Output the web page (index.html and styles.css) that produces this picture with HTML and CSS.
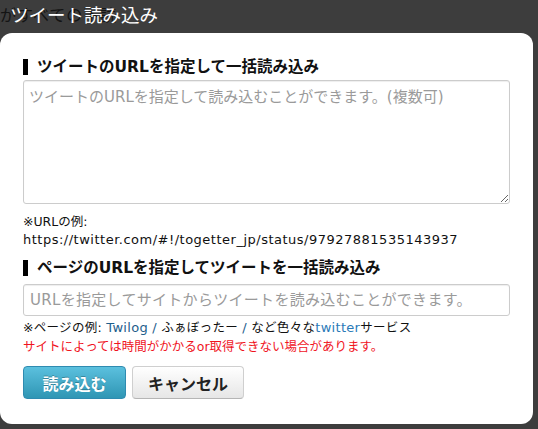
FILE: index.html
```html
<!DOCTYPE html>
<html lang="ja">
<head>
<meta charset="utf-8">
<title>ツイート読み込み</title>
<link rel="stylesheet" href="styles.css">
</head>
<body>
<div class="titlebar">
  <span class="ghost">がすべての下読</span>
  <h1 class="title">ツイート読み込み</h1>
</div>
<div class="panel">
  <h2 class="heading">ツイートのURLを指定して一括読み込み</h2>
  <textarea class="area" placeholder="ツイートのURLを指定して読み込むことができます。(複数可)"></textarea>
  <p class="note">※URLの例:<br><span class="url">https://twitter.com/#!/togetter_jp/status/97927881535143937</span></p>
  <h2 class="heading">ページのURLを指定してツイートを一括読み込み</h2>
  <input class="field" type="text" placeholder="URLを指定してサイトからツイートを読み込むことができます。">
  <p class="note note-ex">※ページの例: <span class="link">Twilog</span> <span class="link">/</span> ふぁぼったー <span class="link">/</span> など色々な<span class="link light">twitter</span>サービス</p>
  <p class="warn">サイトによっては時間がかかるor取得できない場合があります。</p>
  <div class="actions">
    <button class="btn btn-primary" type="button">読み込む</button>
    <button class="btn btn-default" type="button">キャンセル</button>
  </div>
</div>
</body>
</html>
```
FILE: styles.css
```css
html, body {
  margin: 0;
  padding: 0;
}
body {
  background: #3d3d3d;
  font-family: "DejaVu Sans", "Noto Sans CJK JP", sans-serif;
  color: #222;
  width: 538px;
  height: 429px;
  overflow: hidden;
}
.titlebar {
  position: relative;
  height: 33px;
  padding-left: 10px;
  box-sizing: border-box;
}
.ghost {
  position: absolute;
  left: 0;
  top: 3px;
  font-family: "Noto Sans CJK JP", sans-serif;
  font-size: 16px;
  line-height: 22px;
  color: #141414;
  white-space: nowrap;
  letter-spacing: 1px;
}
.title {
  position: relative;
  margin: 0;
  font-family: "Noto Sans CJK JP", sans-serif;
  font-weight: normal;
  font-size: 18.5px;
  line-height: 29px;
  color: #fff;
}
.panel {
  width: 533px;
  height: 391px;
  box-sizing: border-box;
  background: #fff;
  border-radius: 12px;
  padding: 26px 0 0 23px;
}
.heading {
  margin: 0;
  border-left: 5px solid #000;
  padding-left: 9px;
  font-size: 15.5px;
  font-weight: bold;
  line-height: 16px;
  color: #111;
  font-family: "DejaVu Sans", "Noto Sans CJK JP", sans-serif;
}
.area {
  display: block;
  margin: 5px 0 0 0;
  width: 487px;
  height: 124px;
  box-sizing: border-box;
  border: 1px solid #ccc;
  border-radius: 3px;
  padding: 6px 5px;
  font-size: 15px;
  line-height: 20px;
  font-family: "DejaVu Sans", "Noto Sans CJK JP", sans-serif;
  resize: vertical;
  box-shadow: inset 0 1px 1px rgba(0,0,0,0.07);
}
.area::placeholder, .field::placeholder {
  color: #9a9a9a;
}
.note {
  margin: 9px 0 0 0;
  font-size: 12.5px;
  line-height: 18px;
  color: #111;
}
.url {
  font-size: 13px;
  letter-spacing: 0.5px;
}
.note + .heading {
  margin-top: 11px;
}
.field {
  display: block;
  margin: 8px 0 0 0;
  width: 487px;
  height: 32px;
  box-sizing: border-box;
  border: 1px solid #ccc;
  border-radius: 3px;
  padding: 0 6px;
  font-size: 15px;
  letter-spacing: 0.3px;
  font-family: "DejaVu Sans", "Noto Sans CJK JP", sans-serif;
  box-shadow: inset 0 1px 1px rgba(0,0,0,0.07);
}
.note-ex {
  margin-top: 3px;
  letter-spacing: 0.3px;
}
.link {
  color: #1e5e8c;
  font-size: 13px;
}
.link.light {
  color: #2a7ab8;
}
.warn {
  margin: 1px 0 0 0;
  font-size: 12.5px;
  line-height: 18px;
  color: #f0141e;
}
.actions {
  display: flex;
  gap: 6px;
  margin-top: 10px;
}
.btn {
  height: 33px;
  border-radius: 4px;
  font-family: "Noto Sans CJK JP", sans-serif;
  font-size: 16px;
  font-weight: bold;
  cursor: pointer;
  padding: 0;
}
.btn-primary {
  width: 103px;
  color: #fff;
  border: 1px solid #2f8bb0;
  background: linear-gradient(#5bc0de, #2f96b4);
  text-shadow: 0 -1px 0 rgba(0,0,0,0.25);
}
.btn-default {
  width: 112px;
  color: #222;
  border: 1px solid #cfcfcf;
  border-bottom-color: #b5b5b5;
  background: linear-gradient(#ffffff, #e6e6e6);
}
```
